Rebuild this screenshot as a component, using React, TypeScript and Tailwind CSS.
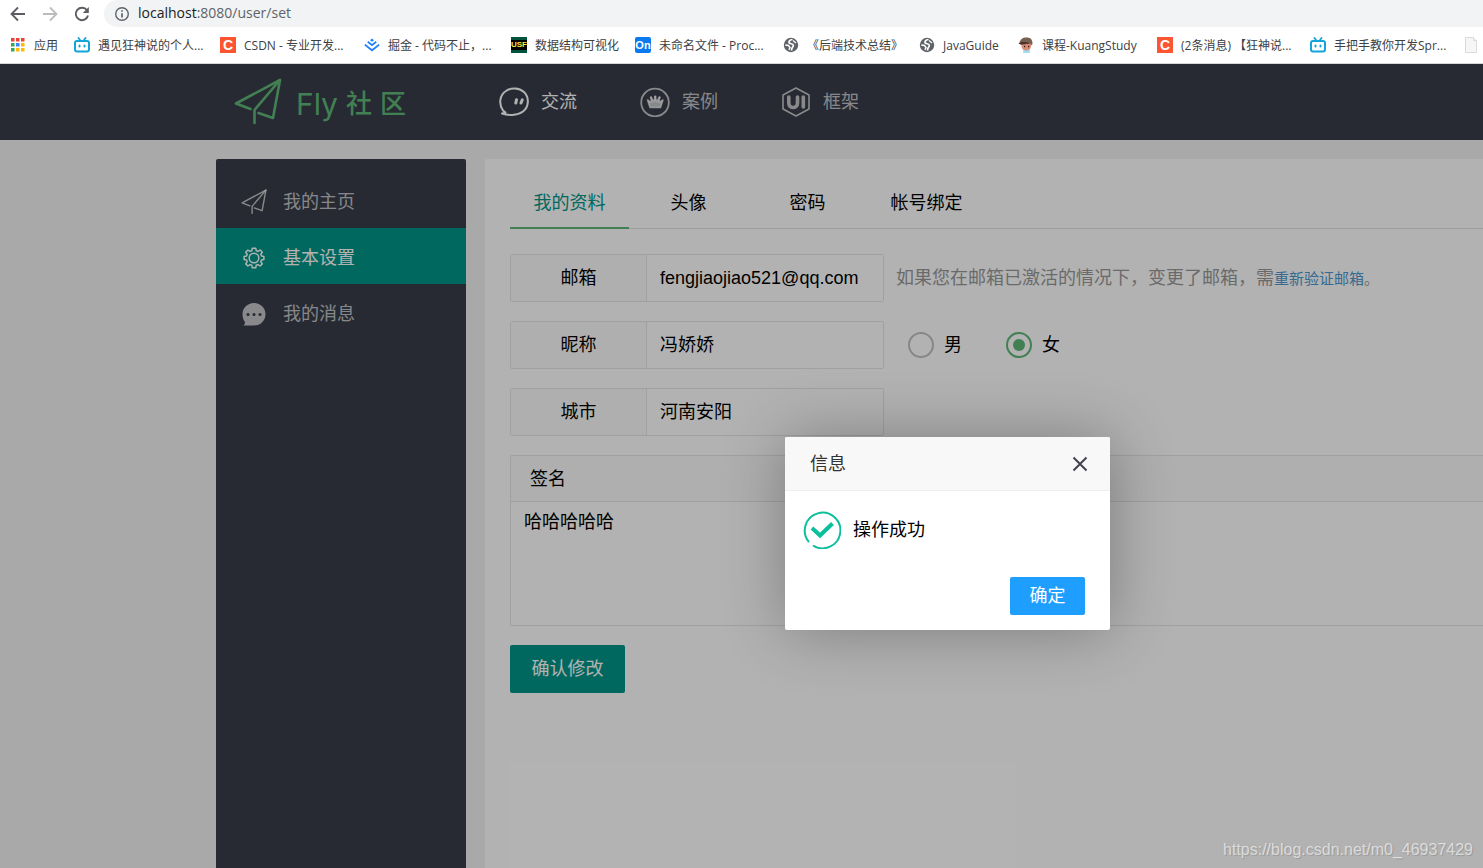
import { useState } from "react";
import type { ReactNode } from "react";

function PlaneIcon({ className, strokeWidth }: { className: string; strokeWidth: number }) {
  return (
    <svg viewBox="0 0 48 48" className={className} fill="none" stroke="currentColor" strokeWidth={strokeWidth} strokeLinecap="round" strokeLinejoin="round">
      <path d="M16.500 31 L2 25.500 L46 2 L39 40 L24.500 35" />
      <path d="M46 2 L20.500 32 V45" />
    </svg>
  );
}

function AppsIcon() {
  const colors = ["#ea4335", "#ea4335", "#ea4335", "#34a853", "#4285f4", "#fbbc05", "#34a853", "#fbbc05", "#fbbc05"];
  return (
    <svg viewBox="0 0 16 16" className="size-4 shrink-0">
      {colors.map((color, i) => (
        <rect key={i} x={1 + (i % 3) * 5} y={1 + Math.floor(i / 3) * 5} width="3.5" height="3.5" fill={color} />
      ))}
    </svg>
  );
}

function BiliIcon() {
  return (
    <svg viewBox="0 0 16 16" className="size-4 shrink-0" fill="none" stroke="#13a5da" strokeLinecap="round">
      <rect x="1" y="4" width="14" height="10.500" rx="2" strokeWidth="2" />
      <path d="M4.500 1 L6 3 M11.500 1 L10 3" strokeWidth="1.800" />
      <path d="M5.500 8.500 V9.500 M10.500 8.500 V9.500" strokeWidth="2" />
    </svg>
  );
}

function CsdnIcon() {
  return (
    <span className="flex size-4 shrink-0 items-center justify-center bg-[#fc5531] font-['Liberation_Sans'] text-sm leading-4 font-bold text-white">
      C
    </span>
  );
}

function JuejinIcon() {
  return (
    <svg viewBox="0 0 16 16" className="size-4 shrink-0" fill="none" stroke="#1e80ff" strokeWidth="1.800">
      <path d="M8 1.500 L10 3.200 L8 4.800 L6 3.200 Z" fill="#1e80ff" stroke="none" />
      <path d="M3.800 4.800 L8 8.200 L12.200 4.800" />
      <path d="M0.800 7.600 L8 13.300 L15.200 7.600" />
    </svg>
  );
}

function UsfIcon() {
  return (
    <span className="flex size-4 shrink-0 items-center justify-center border-y-3 border-[#00543c] bg-black font-['Liberation_Sans'] text-[8px] leading-[10px] font-bold text-[#ffe93b]">
      USF
    </span>
  );
}

function OnIcon() {
  return (
    <span className="flex size-4 shrink-0 items-center justify-center rounded-xs bg-[#0b79f0] font-['Liberation_Sans'] text-[11px] leading-4 font-bold text-white">
      On
    </span>
  );
}

function GlobeIcon() {
  return (
    <svg viewBox="0 0 16 16" className="size-4 shrink-0">
      <circle cx="8" cy="8" r="7.200" fill="#5f6368" />
      <path d="M9.500 2.500 C7.500 2.800 5.800 3.800 6 5.500 C6.300 7.200 9.800 6.300 10.300 8 C10.800 9.500 9 10 8.700 12 L8.500 13.500" fill="none" stroke="#fff" strokeWidth="1.700" />
      <path d="M2.300 8 L5.500 8.500 L7 10.500 L6 12.800" fill="none" stroke="#fff" strokeWidth="1.500" />
      <path d="M10 3.500 L13 6" stroke="#fff" strokeWidth="1.200" />
    </svg>
  );
}

function AvatarIcon() {
  return (
    <svg viewBox="0 0 16 16" className="size-4 shrink-0">
      <path d="M5.500 12 H11.500 L12 16 H5 Z" fill="#9fdcf0" />
      <path d="M3.500 6 H13 V9 C13 12 11 13.500 8.500 13.500 C6 13.500 3.500 12 3.500 9 Z" fill="#d98b73" />
      <path d="M1.500 6 C2 2.500 4.500 0.500 8.500 0.500 C12.500 0.500 14.500 2.500 14.500 7 L13 8.500 L12.500 6 H4 Z" fill="#77604f" />
      <path d="M0.500 6.500 C3 4.500 8 4.500 12.500 6.500 L3 7.800 Z" fill="#4b302b" />
      <path d="M6 9.500 H7.200 M10 9.500 H11.200" stroke="#3a1f1c" strokeWidth="1.300" />
    </svg>
  );
}

function PageIcon() {
  return (
    <svg viewBox="0 0 16 16" className="size-4 shrink-0" fill="#f6f6f6" stroke="#dadada">
      <path d="M2.500 0.500 H10.500 L13.500 3.500 V15.500 H2.500 Z" />
      <path d="M10.500 0.500 V3.500 H13.500" />
    </svg>
  );
}

const bookmarks: { icon: ReactNode; label: string; width: string }[] = [
  { icon: <AppsIcon />, label: "应用", width: "w-12" },
  { icon: <BiliIcon />, label: "遇见狂神说的个人...", width: "w-[130px]" },
  { icon: <CsdnIcon />, label: "CSDN - 专业开发...", width: "w-[128px]" },
  { icon: <JuejinIcon />, label: "掘金 - 代码不止，...", width: "w-[131px]" },
  { icon: <UsfIcon />, label: "数据结构可视化", width: "w-[108px]" },
  { icon: <OnIcon />, label: "未命名文件 - Proc...", width: "w-[132px]" },
  { icon: <GlobeIcon />, label: "《后端技术总结》", width: "w-[120px]" },
  { icon: <GlobeIcon />, label: "JavaGuide", width: "w-[83px]" },
  { icon: <AvatarIcon />, label: "课程-KuangStudy", width: "w-[123px]" },
  { icon: <CsdnIcon />, label: "(2条消息) 【狂神说...", width: "w-[137px]" },
  { icon: <BiliIcon />, label: "手把手教你开发Spr...", width: "w-[137px]" },
  { icon: <PageIcon />, label: "", width: "w-4" },
];

function BrowserBar() {
  return (
    <div className="h-16 overflow-hidden border-b border-[#d5d7da] bg-white font-['Open_Sans','Noto_Sans_CJK_SC',sans-serif]">
      <div className="flex h-[27px] items-center pl-2.5">
        <button type="button" aria-label="后退" className="w-8 text-[#5a5d61]">
          <svg viewBox="0 0 16 16" className="size-4" fill="none" stroke="currentColor" strokeWidth="1.800">
            <path d="M15 8 H2 M8 1.500 L1.500 8 L8 14.500" />
          </svg>
        </button>
        <button type="button" aria-label="前进" className="w-8 text-[#babcbe]">
          <svg viewBox="0 0 16 16" className="size-4" fill="none" stroke="currentColor" strokeWidth="1.800">
            <path d="M1 8 H14 M8 1.500 L14.500 8 L8 14.500" />
          </svg>
        </button>
        <button type="button" aria-label="刷新" className="w-[30px] text-[#5a5d61]">
          <svg viewBox="0 0 16 16" className="size-4" fill="none" stroke="currentColor" strokeWidth="1.900">
            <path d="M13 4.300 A6.200 6.200 0 1 0 14 9.500" />
            <path d="M14.800 1 V7 H8.800 Z" fill="currentColor" stroke="none" />
          </svg>
        </button>
        <div className="flex h-full flex-1 items-center gap-2 rounded-l-full bg-[#f1f3f4] pl-2.5">
          <svg viewBox="0 0 16 16" className="size-4" fill="none" stroke="#5f6368" strokeWidth="1.400">
            <circle cx="8" cy="8" r="6.300" />
            <path d="M8 7.200 V11.500 M8 4.300 V5.800" strokeWidth="1.700" />
          </svg>
          <span className="pb-0.5 text-sm text-[#5f6368]">
            <span className="text-[#202124]">localhost</span>:8080/user/set
          </span>
        </div>
      </div>
      <nav className="flex h-9 items-center gap-4 overflow-hidden pl-2.5 text-xs text-[#3c4043]">
        {bookmarks.map((item, i) => (
          <a key={i} href="#" className={`flex shrink-0 items-center gap-2 whitespace-nowrap ${item.width}`}>
            {item.icon}
            {item.label && <span className="pt-0.5">{item.label}</span>}
          </a>
        ))}
      </nav>
    </div>
  );
}

function ChatIcon() {
  return (
    <svg viewBox="0 0 30 30" className="size-[30px]" fill="none" stroke="currentColor" strokeWidth="2" strokeLinecap="round" strokeLinejoin="round">
      <path d="M4 23.500 C-0.500 17 0.500 8 7 4 C12 0.500 20 0.500 25 5 C30.500 10.500 30 20 24 24.500 C18 29 9 28.500 3 26.500 L6.500 25.500 L4 23.500" />
      <path d="M17.500 12.800 L16.800 16 M23.300 12.800 L22 16" strokeWidth="3" />
    </svg>
  );
}

function CrownIcon() {
  return (
    <svg viewBox="0 0 30 30" className="size-[30px]" fill="currentColor">
      <circle cx="15" cy="15.500" r="13.800" fill="none" stroke="currentColor" strokeWidth="1.800" />
      <path d="M10 20.500 L7.500 13 L11.500 15.500 L11 10.500 L14 14.500 L15.200 9.500 L16.500 14.500 L19.500 10.500 L19 15.500 L23 13 L20.500 20.500 Z" strokeLinejoin="round" stroke="currentColor" strokeWidth="1.500" />
      <circle cx="11" cy="10.500" r="1.200" />
      <circle cx="15.200" cy="9.800" r="1.300" />
      <circle cx="19.500" cy="10.500" r="1.200" />
    </svg>
  );
}

function UiIcon() {
  return (
    <svg viewBox="0 0 30 30" className="size-[30px]" fill="none" stroke="currentColor">
      <path d="M15 1 L28 8 V22 L15 29 L2 22 V8 Z" strokeWidth="1.600" strokeLinejoin="round" />
      <path d="M7.800 10 V16 C7.800 22 16.500 22 16.500 16 V10 M22.300 10 V20" strokeWidth="3.600" strokeLinecap="round" />
    </svg>
  );
}

function GearIcon() {
  return (
    <svg viewBox="0 0 26 26" className="size-[26px]" fill="none" stroke="currentColor" strokeWidth="1.500" strokeLinejoin="round">
      <g transform="translate(1 1)">
        <circle cx="12" cy="12" r="4.800" />
        <path d="M10.300 2.200 H13.700 L14.200 4.700 L16 5.400 L18.100 4 L20.300 6.200 L18.800 8.200 L19.500 10 L21.900 10.400 V13.600 L19.500 14 L18.800 15.800 L20.300 17.900 L18.100 20 L16 18.600 L14.200 19.300 L13.700 21.800 H10.300 L9.800 19.300 L8 18.600 L5.900 20 L3.700 17.900 L5.200 15.800 L4.500 14 L2.100 13.600 V10.400 L4.500 10 L5.200 8.200 L3.700 6.200 L5.900 4 L8 5.400 L9.800 4.700 Z" />
      </g>
    </svg>
  );
}

function MessageIcon() {
  return (
    <svg viewBox="0 0 26 26" className="size-[26px]" fill="currentColor">
      <path d="M13 2 C19.500 2 24.500 7 24.500 13.200 C24.500 19.500 19.500 24.500 13 24.500 H2.500 C3.500 23.500 4 22.500 4 21 C2.500 19 1.500 16.500 1.500 13.200 C1.500 7 6.500 2 13 2 Z" />
      <g className="fill-[#393d49]">
        <circle cx="7" cy="13.500" r="1.500" />
        <circle cx="13" cy="13.500" r="1.500" />
        <circle cx="19" cy="13.500" r="1.500" />
      </g>
    </svg>
  );
}

const navItems = [
  { icon: <ChatIcon />, label: "交流", active: true },
  { icon: <CrownIcon />, label: "案例", active: false },
  { icon: <UiIcon />, label: "框架", active: false },
];

const sideItems = [
  { icon: <PlaneIcon className="size-[26px]" strokeWidth={2.6} />, label: "我的主页", active: false },
  { icon: <GearIcon />, label: "基本设置", active: true },
  { icon: <MessageIcon />, label: "我的消息", active: false },
];

const tabs = ["我的资料", "头像", "密码", "帐号绑定"];

function Field({ id, label, value, type = "text" }: { id: string; label: string; value: string; type?: string }) {
  return (
    <div className="flex h-12 w-[374px] shrink-0 rounded-xs border border-[#e6e6e6]">
      <label htmlFor={id} className="flex w-[136px] items-center justify-center border-r border-[#e6e6e6] bg-[#fbfbfb]">
        {label}
      </label>
      <input id={id} type={type} defaultValue={value} className="min-w-0 flex-1 bg-white px-[13px] outline-none" />
    </div>
  );
}

function Radio({ label, value, checked, onChange }: { label: string; value: string; checked: boolean; onChange: (value: string) => void }) {
  return (
    <label className="flex items-center gap-2.5">
      <input
        type="radio"
        name="sex"
        value={value}
        checked={checked}
        onChange={() => onChange(value)}
        className="flex size-[26px] appearance-none items-center justify-center rounded-full border-2 border-[#c2c2c2] checked:border-[#5fb878] checked:before:size-3 checked:before:rounded-full checked:before:bg-[#5fb878]"
      />
      {label}
    </label>
  );
}

function Dialog({ onClose }: { onClose: () => void }) {
  return (
    <div role="dialog" aria-label="信息" className="absolute top-[373px] left-[785px] w-[325px] rounded-xs bg-white shadow-[1px_1px_63px_rgba(0,0,0,0.3)]">
      <div className="flex h-[54px] items-center justify-between rounded-t-xs border-b border-[#eeeeee] bg-[#f8f8f8] pr-[22px] pl-[25px] text-[#333333]">
        <h2>信息</h2>
        <button type="button" aria-label="关闭" onClick={onClose}>
          <svg viewBox="0 0 16 16" className="size-4" fill="none" stroke="#45434f" strokeWidth="2">
            <path d="M1.500 1.500 L14.500 14.500 M14.500 1.500 L1.500 14.500" />
          </svg>
        </button>
      </div>
      <div className="flex items-center gap-3 pt-5 pl-[18px]">
        <svg viewBox="0 0 38 38" className="size-[38px]" fill="none" stroke="#0abf9c">
          <path d="M6 31 A17.800 17.800 0 1 1 10 34.500" strokeWidth="2" />
          <path d="M9 17 L17 24.500 L29.500 12.500" strokeWidth="4" />
        </svg>
        <p>操作成功</p>
      </div>
      <div className="flex justify-end px-[25px] pt-7 pb-[15px]">
        <button type="button" onClick={onClose} className="h-[38px] w-[75px] rounded-xs bg-[#1e9fff] text-white">
          确定
        </button>
      </div>
    </div>
  );
}

export default function App() {
  const [sex, setSex] = useState("1");
  const [tab, setTab] = useState(0);
  const [open, setOpen] = useState(true);

  return (
    <div className="flex min-h-screen flex-col">
      <BrowserBar />

      <div className="relative flex flex-1 flex-col overflow-hidden bg-[#f2f2f2] font-['Liberation_Sans','Noto_Sans_CJK_SC',sans-serif] text-lg leading-7 text-black">
        <header className="flex h-[76px] items-center bg-[#393d49] pl-[234px]">
          <a href="#" className="flex w-[265px] items-center gap-3.5 text-[#5fb878]">
            <PlaneIcon className="size-12" strokeWidth={2.6} />
            <span className="flex items-center gap-2 pt-1 text-[26px] font-medium">
              <span className="font-['Inter'] text-[30px] font-normal">Fly</span>
              <span>社</span>
              <span>区</span>
            </span>
          </a>
          <nav className="flex gap-[63px]">
            {navItems.map((item) => (
              <a key={item.label} href="#" className={`flex items-center gap-3 ${item.active ? "text-white" : "text-white/70"}`}>
                {item.icon}
                {item.label}
              </a>
            ))}
          </nav>
        </header>

        <div className="flex flex-1 gap-[19px] pt-[19px] pl-[216px]">
          <aside className="w-[250px] shrink-0 rounded-t-xs bg-[#393d49] pt-[13px]">
            {sideItems.map((item) => (
              <a
                key={item.label}
                href="#"
                className={`flex h-14 items-center gap-4 pt-1 pl-[25px] ${item.active ? "bg-[#009688] text-white" : "text-white/70"}`}
              >
                {item.icon}
                {item.label}
              </a>
            ))}
          </aside>

          <main className="min-w-0 flex-1 rounded-tl-xs bg-white pt-5 pl-[25px]">
            <div role="tablist" className="flex h-[50px] border-b border-[#e2e2e2]">
              {tabs.map((name, i) => (
                <button
                  key={name}
                  type="button"
                  role="tab"
                  aria-selected={i === tab}
                  onClick={() => setTab(i)}
                  className={`h-[50px] w-[119px] border-b-2 ${i === tab ? "border-[#5fb878] text-[#009688]" : "border-transparent"}`}
                >
                  {name}
                </button>
              ))}
            </div>

            <form className="flex flex-col gap-[19px] pt-[25px]" onSubmit={(event) => event.preventDefault()}>
              <div className="flex items-center gap-3">
                <Field id="email" type="email" label="邮箱" value="fengjiaojiao521@qq.com" />
                <p className="whitespace-nowrap text-[#999999]">
                  如果您在邮箱已激活的情况下，变更了邮箱，需
                  <span className="text-[15px]">
                    <a href="#" className="text-[#4f99cf]">重新验证邮箱</a>。
                  </span>
                </p>
              </div>
              <div className="flex items-center gap-6">
                <Field id="username" label="昵称" value="冯娇娇" />
                <div className="flex gap-11">
                  <Radio label="男" value="0" checked={sex === "0"} onChange={setSex} />
                  <Radio label="女" value="1" checked={sex === "1"} onChange={setSex} />
                </div>
              </div>
              <Field id="city" label="城市" value="河南安阳" />
              <div className="flex flex-col rounded-l-xs border border-r-0 border-[#e6e6e6]">
                <label htmlFor="sign" className="flex h-[46px] items-center border-b border-[#e6e6e6] bg-[#fbfbfb] pl-[19px]">
                  签名
                </label>
                <textarea id="sign" defaultValue="哈哈哈哈哈" className="h-[123px] resize-none bg-white px-[13px] py-1.5 outline-none" />
              </div>
              <button type="submit" className="h-12 w-[115px] rounded-xs bg-[#009688] text-white">
                确认修改
              </button>
            </form>
          </main>
        </div>

        {open && (
          <>
            <div className="absolute inset-0 bg-black/30" />
            <Dialog onClose={() => setOpen(false)} />
          </>
        )}

        <span className="absolute right-2.5 bottom-1.5 text-base leading-6 text-white/60 [text-shadow:1px_1px_1px_rgba(0,0,0,0.15)]">
          https://blog.csdn.net/m0_46937429
        </span>
      </div>
    </div>
  );
}
